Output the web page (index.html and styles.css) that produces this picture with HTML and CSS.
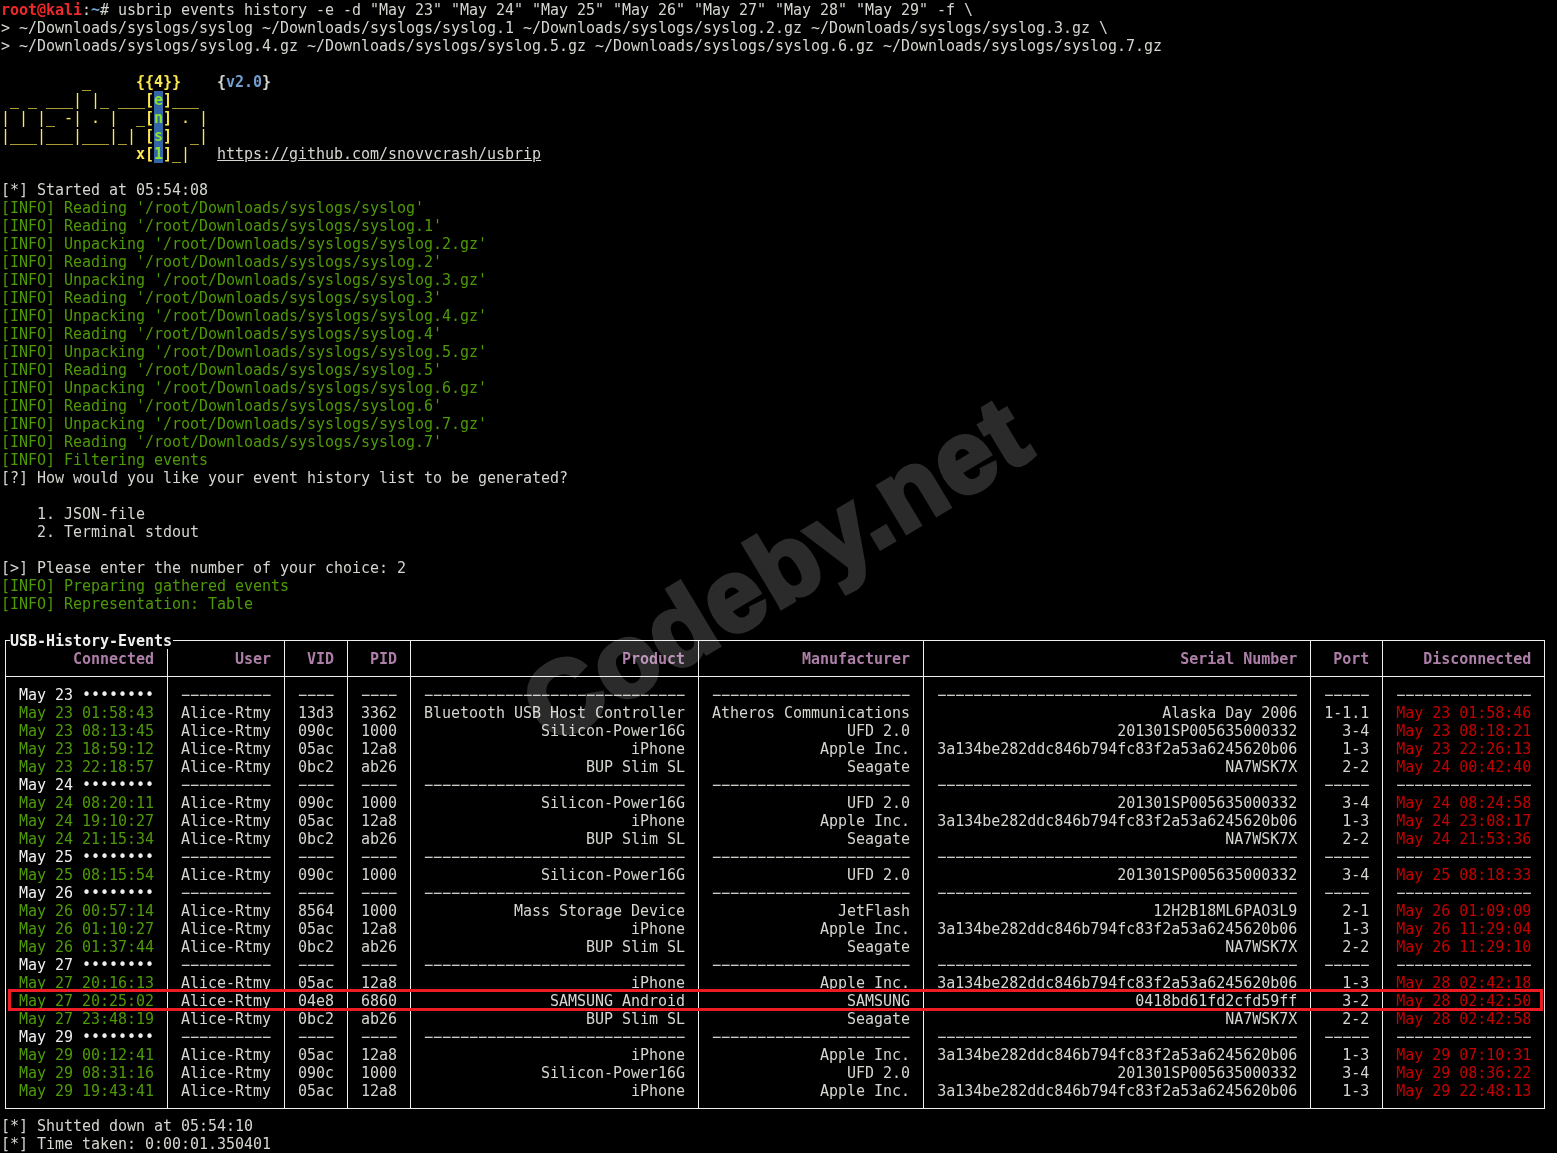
FILE: index.html
```html
<!DOCTYPE html>
<html lang="en">
<head>
<meta charset="utf-8">
<title>usbrip events history</title>
<link rel="stylesheet" href="styles.css">
</head>
<body>
<main class="term">
<pre class="out"><span class="prompt-user">root@kali</span>:<span class="prompt-path">~</span># usbrip events history -e -d "May 23" "May 24" "May 25" "May 26" "May 27" "May 28" "May 29" -f \
&gt; ~/Downloads/syslogs/syslog ~/Downloads/syslogs/syslog.1 ~/Downloads/syslogs/syslog.2.gz ~/Downloads/syslogs/syslog.3.gz \
&gt; ~/Downloads/syslogs/syslog.4.gz ~/Downloads/syslogs/syslog.5.gz ~/Downloads/syslogs/syslog.6.gz ~/Downloads/syslogs/syslog.7.gz

<span class="logo">         _     <b>{{4}}</b></span>    <b class="ver-brace">{</b><b class="ver">v2.0</b><b class="ver-brace">}</b>
<span class="logo"> _ _ ___| |_ ___<b>[<span class="cell">e</span>]</b>___</span>
<span class="logo">| | |_ -| . |  _<b>[<span class="cell">n</span>]</b> . |</span>
<span class="logo">|___|___|___|_| <b>[<span class="cell">s</span>]</b>  _|</span>
<span class="logo">               <b>x[<span class="cell">1</span>]</b>_|</span>   <u>https://github.com/snovvcrash/usbrip</u>

[*] Started at 05:54:08
<span class="info">[INFO] Reading '/root/Downloads/syslogs/syslog'
[INFO] Reading '/root/Downloads/syslogs/syslog.1'
[INFO] Unpacking '/root/Downloads/syslogs/syslog.2.gz'
[INFO] Reading '/root/Downloads/syslogs/syslog.2'
[INFO] Unpacking '/root/Downloads/syslogs/syslog.3.gz'
[INFO] Reading '/root/Downloads/syslogs/syslog.3'
[INFO] Unpacking '/root/Downloads/syslogs/syslog.4.gz'
[INFO] Reading '/root/Downloads/syslogs/syslog.4'
[INFO] Unpacking '/root/Downloads/syslogs/syslog.5.gz'
[INFO] Reading '/root/Downloads/syslogs/syslog.5'
[INFO] Unpacking '/root/Downloads/syslogs/syslog.6.gz'
[INFO] Reading '/root/Downloads/syslogs/syslog.6'
[INFO] Unpacking '/root/Downloads/syslogs/syslog.7.gz'
[INFO] Reading '/root/Downloads/syslogs/syslog.7'
[INFO] Filtering events</span>
[?] How would you like your event history list to be generated?

    1. JSON-file
    2. Terminal stdout

[&gt;] Please enter the number of your choice: 2
<span class="info">[INFO] Preparing gathered events
[INFO] Representation: Table</span></pre>

<section class="events">
<h1 class="events-title">USB-History-Events</h1>
<table class="events-table">
<thead>
<tr><th>Connected</th><th>User</th><th>VID</th><th>PID</th><th>Product</th><th>Manufacturer</th><th>Serial Number</th><th>Port</th><th>Disconnected</th></tr>
</thead>
<tbody>
<tr class="spacer-top"><td></td><td></td><td></td><td></td><td></td><td></td><td></td><td></td><td></td></tr>
<tr><td class="day">May 23 ••••••••</td><td>−−−−−−−−−−</td><td>−−−−</td><td>−−−−</td><td>−−−−−−−−−−−−−−−−−−−−−−−−−−−−−</td><td>−−−−−−−−−−−−−−−−−−−−−−</td><td>−−−−−−−−−−−−−−−−−−−−−−−−−−−−−−−−−−−−−−−−</td><td>−−−−−</td><td>−−−−−−−−−−−−−−−</td></tr>
<tr><td class="on">May 23 01:58:43</td><td>Alice-Rtmy</td><td>13d3</td><td>3362</td><td>Bluetooth USB Host Controller</td><td>Atheros Communications</td><td>Alaska Day 2006</td><td>1-1.1</td><td class="off">May 23 01:58:46</td></tr>
<tr><td class="on">May 23 08:13:45</td><td>Alice-Rtmy</td><td>090c</td><td>1000</td><td>Silicon-Power16G</td><td>UFD 2.0</td><td>201301SP005635000332</td><td>3-4</td><td class="off">May 23 08:18:21</td></tr>
<tr><td class="on">May 23 18:59:12</td><td>Alice-Rtmy</td><td>05ac</td><td>12a8</td><td>iPhone</td><td>Apple Inc.</td><td>3a134be282ddc846b794fc83f2a53a6245620b06</td><td>1-3</td><td class="off">May 23 22:26:13</td></tr>
<tr><td class="on">May 23 22:18:57</td><td>Alice-Rtmy</td><td>0bc2</td><td>ab26</td><td>BUP Slim SL</td><td>Seagate</td><td>NA7WSK7X</td><td>2-2</td><td class="off">May 24 00:42:40</td></tr>
<tr><td class="day">May 24 ••••••••</td><td>−−−−−−−−−−</td><td>−−−−</td><td>−−−−</td><td>−−−−−−−−−−−−−−−−−−−−−−−−−−−−−</td><td>−−−−−−−−−−−−−−−−−−−−−−</td><td>−−−−−−−−−−−−−−−−−−−−−−−−−−−−−−−−−−−−−−−−</td><td>−−−−−</td><td>−−−−−−−−−−−−−−−</td></tr>
<tr><td class="on">May 24 08:20:11</td><td>Alice-Rtmy</td><td>090c</td><td>1000</td><td>Silicon-Power16G</td><td>UFD 2.0</td><td>201301SP005635000332</td><td>3-4</td><td class="off">May 24 08:24:58</td></tr>
<tr><td class="on">May 24 19:10:27</td><td>Alice-Rtmy</td><td>05ac</td><td>12a8</td><td>iPhone</td><td>Apple Inc.</td><td>3a134be282ddc846b794fc83f2a53a6245620b06</td><td>1-3</td><td class="off">May 24 23:08:17</td></tr>
<tr><td class="on">May 24 21:15:34</td><td>Alice-Rtmy</td><td>0bc2</td><td>ab26</td><td>BUP Slim SL</td><td>Seagate</td><td>NA7WSK7X</td><td>2-2</td><td class="off">May 24 21:53:36</td></tr>
<tr><td class="day">May 25 ••••••••</td><td>−−−−−−−−−−</td><td>−−−−</td><td>−−−−</td><td>−−−−−−−−−−−−−−−−−−−−−−−−−−−−−</td><td>−−−−−−−−−−−−−−−−−−−−−−</td><td>−−−−−−−−−−−−−−−−−−−−−−−−−−−−−−−−−−−−−−−−</td><td>−−−−−</td><td>−−−−−−−−−−−−−−−</td></tr>
<tr><td class="on">May 25 08:15:54</td><td>Alice-Rtmy</td><td>090c</td><td>1000</td><td>Silicon-Power16G</td><td>UFD 2.0</td><td>201301SP005635000332</td><td>3-4</td><td class="off">May 25 08:18:33</td></tr>
<tr><td class="day">May 26 ••••••••</td><td>−−−−−−−−−−</td><td>−−−−</td><td>−−−−</td><td>−−−−−−−−−−−−−−−−−−−−−−−−−−−−−</td><td>−−−−−−−−−−−−−−−−−−−−−−</td><td>−−−−−−−−−−−−−−−−−−−−−−−−−−−−−−−−−−−−−−−−</td><td>−−−−−</td><td>−−−−−−−−−−−−−−−</td></tr>
<tr><td class="on">May 26 00:57:14</td><td>Alice-Rtmy</td><td>8564</td><td>1000</td><td>Mass Storage Device</td><td>JetFlash</td><td>12H2B18ML6PAO3L9</td><td>2-1</td><td class="off">May 26 01:09:09</td></tr>
<tr><td class="on">May 26 01:10:27</td><td>Alice-Rtmy</td><td>05ac</td><td>12a8</td><td>iPhone</td><td>Apple Inc.</td><td>3a134be282ddc846b794fc83f2a53a6245620b06</td><td>1-3</td><td class="off">May 26 11:29:04</td></tr>
<tr><td class="on">May 26 01:37:44</td><td>Alice-Rtmy</td><td>0bc2</td><td>ab26</td><td>BUP Slim SL</td><td>Seagate</td><td>NA7WSK7X</td><td>2-2</td><td class="off">May 26 11:29:10</td></tr>
<tr><td class="day">May 27 ••••••••</td><td>−−−−−−−−−−</td><td>−−−−</td><td>−−−−</td><td>−−−−−−−−−−−−−−−−−−−−−−−−−−−−−</td><td>−−−−−−−−−−−−−−−−−−−−−−</td><td>−−−−−−−−−−−−−−−−−−−−−−−−−−−−−−−−−−−−−−−−</td><td>−−−−−</td><td>−−−−−−−−−−−−−−−</td></tr>
<tr><td class="on">May 27 20:16:13</td><td>Alice-Rtmy</td><td>05ac</td><td>12a8</td><td>iPhone</td><td>Apple Inc.</td><td>3a134be282ddc846b794fc83f2a53a6245620b06</td><td>1-3</td><td class="off">May 28 02:42:18</td></tr>
<tr><td class="on">May 27 20:25:02</td><td>Alice-Rtmy</td><td>04e8</td><td>6860</td><td>SAMSUNG Android</td><td>SAMSUNG</td><td>0418bd61fd2cfd59ff</td><td>3-2</td><td class="off">May 28 02:42:50</td></tr>
<tr><td class="on">May 27 23:48:19</td><td>Alice-Rtmy</td><td>0bc2</td><td>ab26</td><td>BUP Slim SL</td><td>Seagate</td><td>NA7WSK7X</td><td>2-2</td><td class="off">May 28 02:42:58</td></tr>
<tr><td class="day">May 29 ••••••••</td><td>−−−−−−−−−−</td><td>−−−−</td><td>−−−−</td><td>−−−−−−−−−−−−−−−−−−−−−−−−−−−−−</td><td>−−−−−−−−−−−−−−−−−−−−−−</td><td>−−−−−−−−−−−−−−−−−−−−−−−−−−−−−−−−−−−−−−−−</td><td>−−−−−</td><td>−−−−−−−−−−−−−−−</td></tr>
<tr><td class="on">May 29 00:12:41</td><td>Alice-Rtmy</td><td>05ac</td><td>12a8</td><td>iPhone</td><td>Apple Inc.</td><td>3a134be282ddc846b794fc83f2a53a6245620b06</td><td>1-3</td><td class="off">May 29 07:10:31</td></tr>
<tr><td class="on">May 29 08:31:16</td><td>Alice-Rtmy</td><td>090c</td><td>1000</td><td>Silicon-Power16G</td><td>UFD 2.0</td><td>201301SP005635000332</td><td>3-4</td><td class="off">May 29 08:36:22</td></tr>
<tr><td class="on">May 29 19:43:41</td><td>Alice-Rtmy</td><td>05ac</td><td>12a8</td><td>iPhone</td><td>Apple Inc.</td><td>3a134be282ddc846b794fc83f2a53a6245620b06</td><td>1-3</td><td class="off">May 29 22:48:13</td></tr>
<tr class="spacer-bottom"><td></td><td></td><td></td><td></td><td></td><td></td><td></td><td></td><td></td></tr>
</tbody>
</table>
</section>

<pre class="out footer">[*] Shutted down at 05:54:10
[*] Time taken: 0:00:01.350401</pre>

<div class="highlight"></div>
<div class="watermark">Codeby.net</div>
</main>
</body>
</html>
```

FILE: styles.css
```css
html, body {
  margin: 0;
  padding: 0;
  background: #000;
}

.term {
  position: relative;
  box-sizing: border-box;
  width: 1557px;
  height: 1153px;
  padding-top: 1px;
  overflow: hidden;
  background: #000;
  color: #d3d7cf;
  font-family: "DejaVu Sans Mono", monospace;
  font-size: 15px;
  line-height: 18px;
  letter-spacing: -0.03px;
}

.out {
  margin: 0;
  padding-left: 1px;
  font: inherit;
  white-space: pre;
}

.prompt-user { color: #ef2929; font-weight: bold; }
.prompt-path { color: #729fcf; font-weight: bold; }
.logo { color: #fce94f; }
.ver { color: #729fcf; }
.ver-brace { color: #d3d7cf; }
.info { color: #4e9a06; }

.cell {
  display: inline-block;
  height: 18px;
  vertical-align: top;
  background: #3465a4;
  color: #8ae234;
}

.events {
  position: relative;
  margin: 27px 0 8px 5px;
  width: max-content;
}

.events-title {
  position: absolute;
  top: -8px;
  left: 5px;
  height: 17px;
  margin: 0;
  padding-right: 1px;
  background: #000;
  color: #eeeeec;
  font: inherit;
  font-weight: bold;
}

.events-table {
  border-collapse: collapse;
  border: 1px solid #eeeeec;
  white-space: pre;
}

.events-table th,
.events-table td {
  padding: 0 13px;
  border-left: 1px solid #eeeeec;
  border-right: 1px solid #eeeeec;
  text-align: right;
  font-weight: normal;
}

.events-table th {
  padding-top: 9px;
  padding-bottom: 8px;
  border-bottom: 1px solid #eeeeec;
  color: #ad7fa8;
  font-weight: bold;
}

.events-table td.day { color: #eeeeec; }
.events-table td.on { color: #4e9a06; }
.events-table td.off { color: #c40000; }

.events-table .spacer-top td { height: 9px; }
.events-table .spacer-bottom td { height: 8px; }

.highlight {
  position: absolute;
  left: 8px;
  top: 989px;
  width: 1535px;
  height: 22px;
  box-sizing: border-box;
  border: 3px solid #ed1c24;
}

.watermark {
  position: absolute;
  left: 776px;
  top: 570px;
  transform: translate(-50%, -50%) rotate(-31deg);
  color: #2b2b2b;
  -webkit-text-stroke: 5px #2b2b2b;
  mix-blend-mode: screen;
  font-family: "Liberation Sans", sans-serif;
  font-size: 102px;
  font-weight: bold;
  line-height: 1;
  letter-spacing: 2px;
  white-space: nowrap;
  pointer-events: none;
}
```
